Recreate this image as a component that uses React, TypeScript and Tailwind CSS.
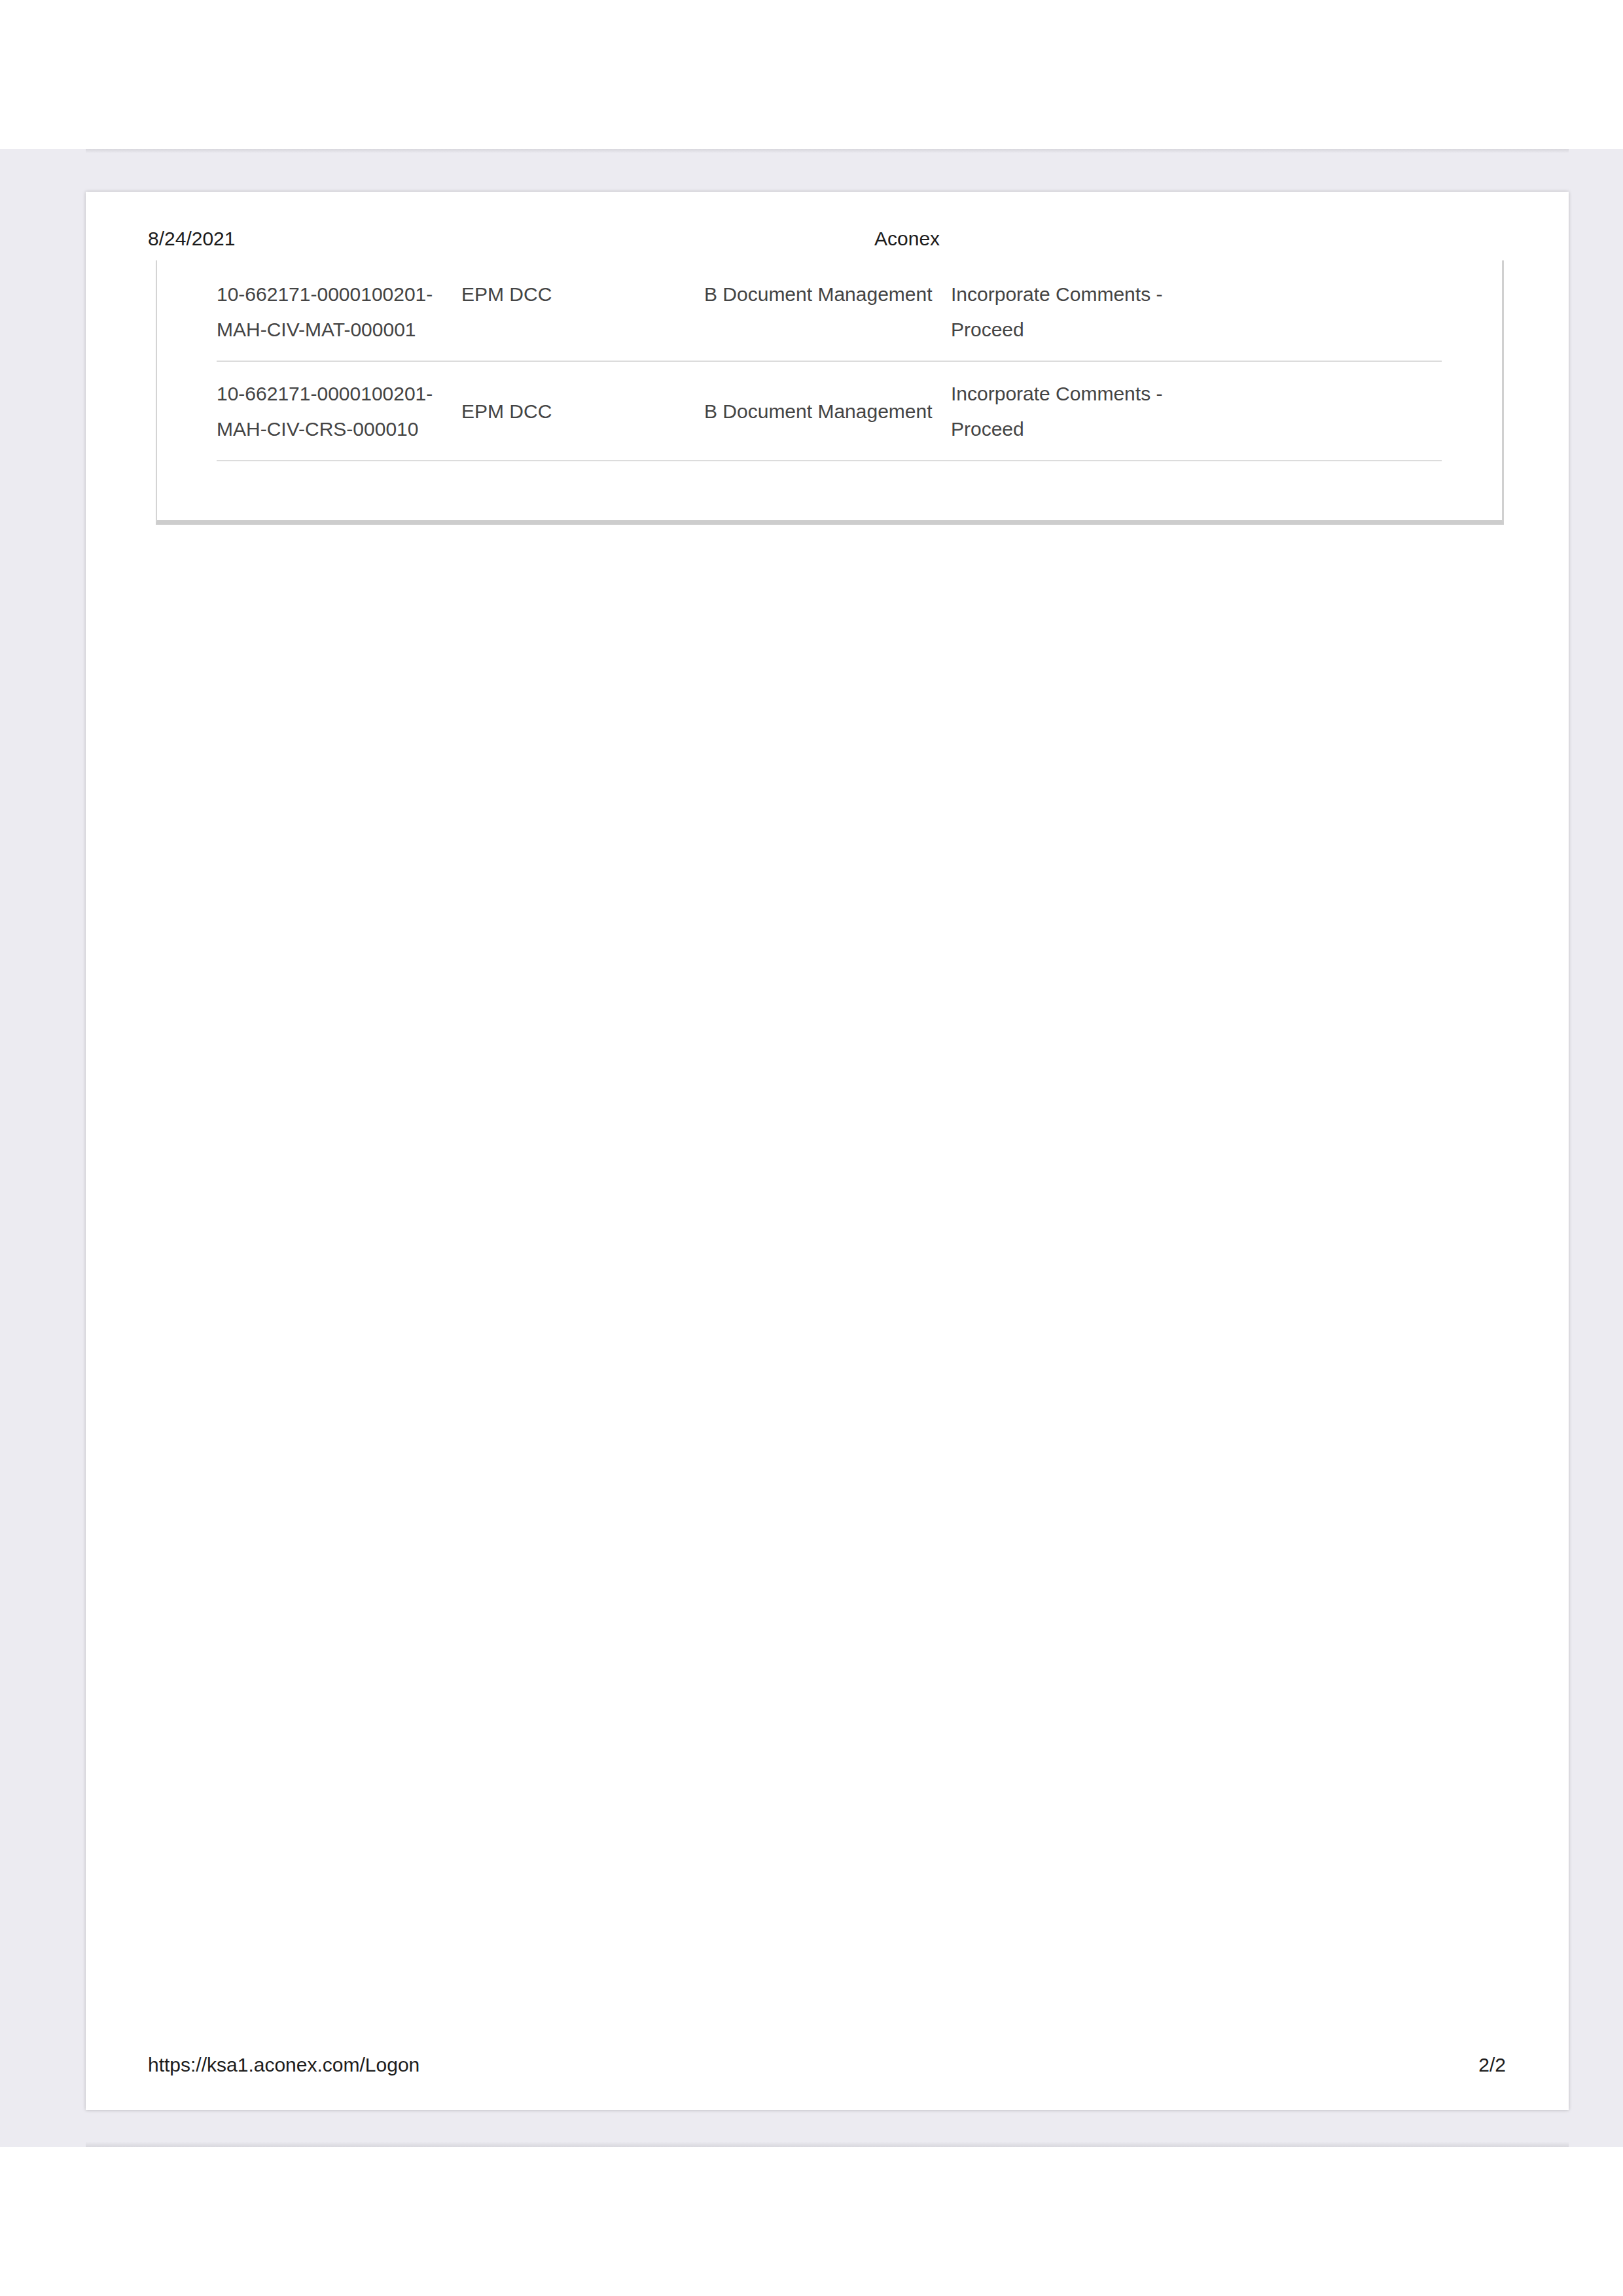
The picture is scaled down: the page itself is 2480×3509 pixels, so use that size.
const rows = [
  {
    id: ["10-662171-0000100201-", "MAH-CIV-MAT-000001"],
    from: "EPM DCC",
    dept: "B Document Management",
    status: ["Incorporate Comments -", "Proceed"],
    align: "items-start",
    pt: "pt-[22px]",
  },
  {
    id: ["10-662171-0000100201-", "MAH-CIV-CRS-000010"],
    from: "EPM DCC",
    dept: "B Document Management",
    status: ["Incorporate Comments -", "Proceed"],
    align: "items-center",
    pt: "pt-[22px]",
  },
];

function Lines({ lines }: { lines: string[] }) {
  return (
    <div>
      {lines.map((l) => (
        <div key={l}>{l}</div>
      ))}
    </div>
  );
}

export default function App() {
  return (
    <div className="min-h-[3509px] bg-white font-['Liberation_Sans',Arial,sans-serif]">
      <div className="h-[228px] bg-white" />

      {/* grey viewer background */}
      <div className="flex h-[3053px] flex-col bg-[#ecebf1]">
        {/* shadow of the previous page */}
        <div className="ml-[131px] h-[6px] w-[2266px] bg-gradient-to-b from-[#d8d7dd] to-[#ecebf1]" />

        <div className="ml-[131px] mt-[59px] flex h-[2932px] w-[2266px] flex-col bg-white pl-[95px] pr-[96px] pt-[57px] pb-[54px] shadow-[0_0_5px_rgba(0,0,0,0.22)]">
          {/* print header */}
          <div className="flex text-[30px] leading-[30px] text-[#1c1c1c]">
            <span className="w-[1110px]">8/24/2021</span>
            <span>Aconex</span>
          </div>

          {/* table continued from previous page */}
          <div className="ml-[12px] mr-[3px] mt-[18px] border-b-[7px] border-l-2 border-r-[3px] border-b-[#cdcdcd] border-l-[#d4d4d4] border-r-[#d0d0d0] pl-[91px] pr-[92px] pt-[3px] pb-[90px]">
            {rows.map((r, i) => (
              <div
                key={i}
                className={`grid grid-cols-[374px_371px_377px_375px_1fr] ${r.align} border-b-2 border-[#dcdcdc] ${r.pt} pb-[20px] text-[30px] leading-[54px] text-[#444444]`}
              >
                <Lines lines={r.id} />
                <div>{r.from}</div>
                <div>{r.dept}</div>
                <Lines lines={r.status} />
                <div />
              </div>
            ))}
          </div>

          <div className="flex-1" />

          {/* print footer */}
          <div className="flex justify-between text-[30px] leading-[30px] text-[#1c1c1c]">
            <span>https://ksa1.aconex.com/Logon</span>
            <span>2/2</span>
          </div>
        </div>

        <div className="flex-1" />
        {/* shadow of the next page */}
        <div className="ml-[131px] h-[8px] w-[2266px] bg-gradient-to-b from-[#ecebf1] to-[#d9d8de]" />
      </div>
    </div>
  );
}
